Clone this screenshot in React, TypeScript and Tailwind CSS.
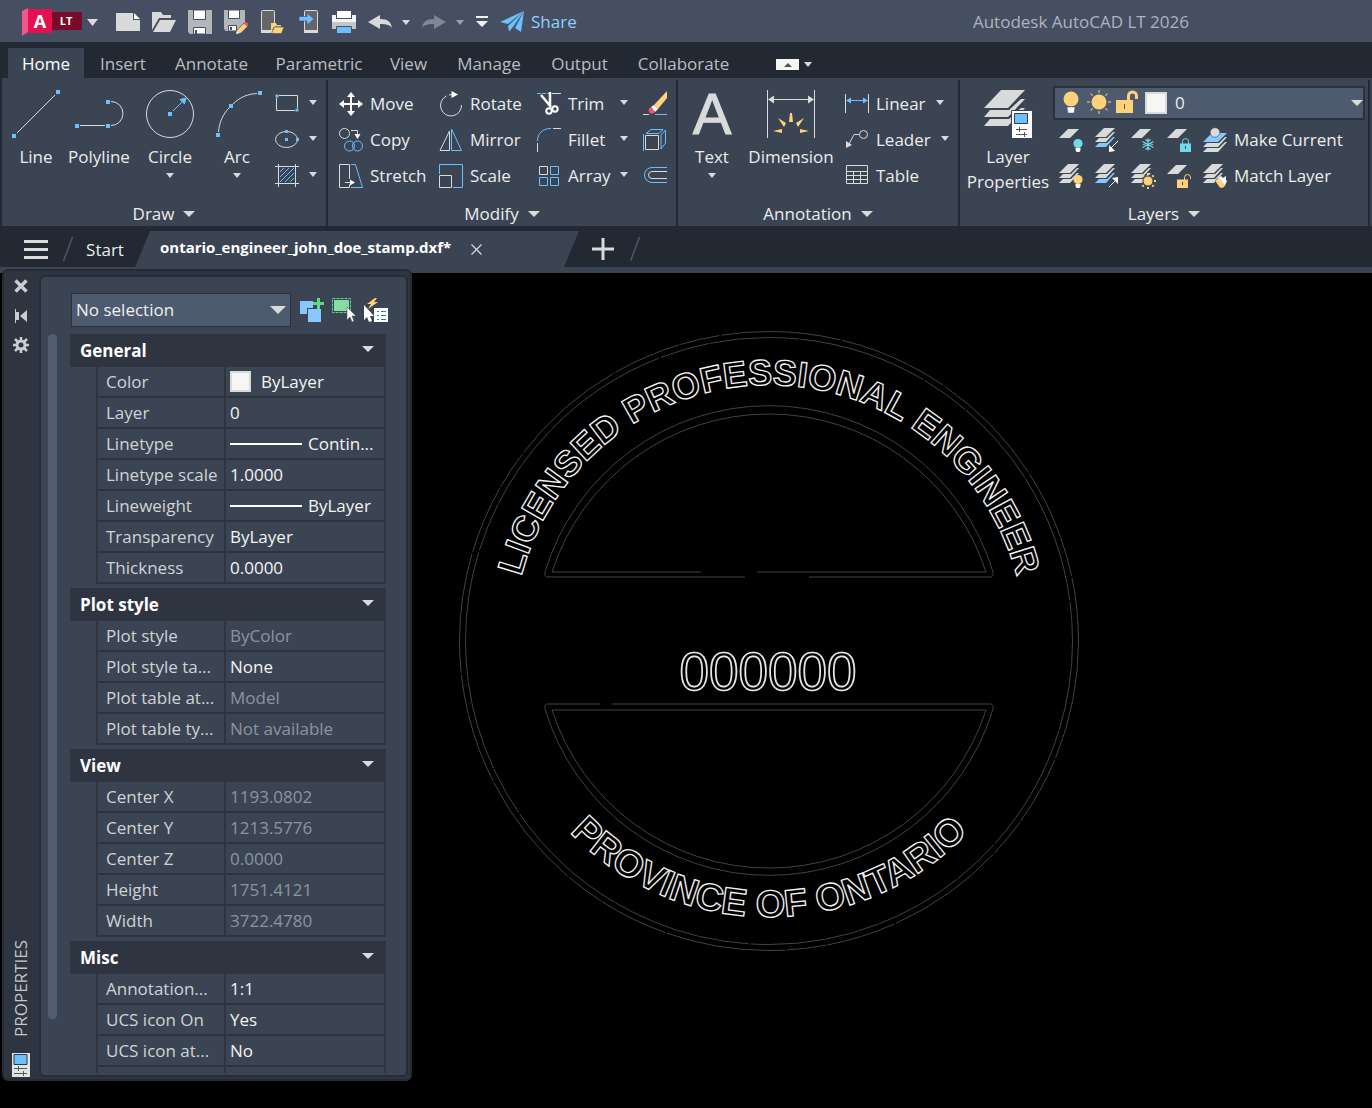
import React from 'react';

const LIGHT = '#d9dbdb';
const BLUE = '#6cc0ff';
const GOLD = '#ffd27a';
const TEAL = '#6fdbe8';

interface ChildrenProps {
  children?: React.ReactNode;
}

/* ---------- Icon helpers ---------- */

const Icon: React.FC<ChildrenProps> = ({ children }) => (
  <svg viewBox="0 0 24 24" className="w-6 h-6 shrink-0 overflow-visible" fill="none" stroke={LIGHT} aria-hidden="true">
    {children}
  </svg>
);

const BigIcon: React.FC<ChildrenProps> = ({ children }) => (
  <svg viewBox="0 0 50 52" className="w-[50px] h-[52px] shrink-0" fill="none" stroke={LIGHT} aria-hidden="true">
    {children}
  </svg>
);

const Dot: React.FC<{ x: number; y: number; size?: number }> = ({ x, y, size = 4 }) => (
  <rect x={x - size / 2} y={y - size / 2} width={size} height={size} fill={BLUE} stroke="none" />
);

const Caret: React.FC<{ dim?: boolean }> = ({ dim }) => (
  <svg viewBox="0 0 8 5" className="w-2 h-[5px] shrink-0" aria-hidden="true">
    <path d="M0 0h8L4 5z" fill={dim ? '#9aa0aa' : LIGHT} />
  </svg>
);

const BigCaret: React.FC = () => (
  <svg viewBox="0 0 12 6" className="w-3 h-[6px] shrink-0" aria-hidden="true">
    <path d="M0 0h12L6 6z" fill={LIGHT} />
  </svg>
);

const Sheet = () => <path d="M0 10 9 1h11l-9 9z" fill={LIGHT} stroke="none" />;

const Sheets: React.FC<{ last?: string; first?: string }> = ({ last = LIGHT, first = LIGHT }) => (
  <g stroke="none" fill={LIGHT}>
    <path d="M0 9 9 0h11l-9 9z" fill={first} />
    <path d="M0 14l4-4h8l6-6h2l-9 10z" />
    <path d="M0 19l4-4h8l6-6h2l-9 10z" fill={last} />
  </g>
);

const Bulb: React.FC<{ color: string }> = ({ color }) => (
  <g stroke="none">
    <circle cx="19" cy="15.5" r="4.6" fill={color} />
    <path d="M16.5 20h5v2l-1 2h-3l-1-2z" fill="#fff" />
  </g>
);

const Rays: React.FC<{ cx: number; cy: number; r: number; len: number; width: number }> = ({ cx, cy, r, len, width }) => (
  <g stroke={GOLD} strokeWidth={width}>
    {[0, 45, 90, 135, 180, 225, 270, 315].map((a) => (
      <path key={a} d={`M${cx + r} ${cy}h${len}`} transform={`rotate(${a} ${cx} ${cy})`} />
    ))}
  </g>
);

/* ---------- Ribbon building blocks ---------- */

const RibbonPanel: React.FC<ChildrenProps & { title: string; className?: string }> = ({ title, className = '', children }) => (
  <section className={`bg-[#3b4453] border-r-2 border-[#222933] ${className}`}>
    <div className="flex h-[116px] pt-[6px] mb-[6px]">{children}</div>
    <button className="flex items-center justify-center gap-[9px] w-full h-6">
      {title}
      <BigCaret />
    </button>
  </section>
);

const BigButton: React.FC<ChildrenProps & { label: string; menu?: boolean; className: string }> = ({ label, menu, className, children }) => (
  <button className={`flex flex-col items-center shrink-0 pt-[2px] ${className}`}>
    {children}
    <span className="mt-1 leading-[25px]">{label}</span>
    {menu && <span className="mt-1"><Caret /></span>}
  </button>
);

const SmallButton: React.FC<ChildrenProps & { label: string }> = ({ label, children }) => (
  <button className="flex items-center gap-[7px] h-9 whitespace-nowrap">
    <Icon>{children}</Icon>
    {label}
  </button>
);

const IconButton: React.FC<ChildrenProps & { label: string }> = ({ label, children }) => (
  <button aria-label={label} className="flex items-center h-9">
    <Icon>{children}</Icon>
  </button>
);

const MenuButton: React.FC<{ label: string }> = ({ label }) => (
  <button aria-label={label} className="flex items-center h-9 pb-[3px]">
    <Caret />
  </button>
);

/* ---------- Title bar ---------- */

const TitleBar: React.FC = () => (
  <header className="flex items-center h-[42px] pt-[2px] bg-[#454f61] pl-[22px]">
    <button aria-label="Application menu" className="flex items-center">
      <svg viewBox="0 0 60 28" className="w-[60px] h-7">
        <path d="M0 3 6 0v24l-6 4z" fill="#f0588a" />
        <path d="M6 1h24v24H6z" fill="#e51050" />
        <path d="M30 4h30v18H30z" fill="#780a2a" />
        <text x="18" y="20" textAnchor="middle" fill="#fff" className="font-bold text-[18px]">A</text>
        <text x="44" y="17" textAnchor="middle" fill="#fff" className="font-bold text-[11px]">LT</text>
      </svg>
      <svg viewBox="0 0 12 7" className="w-3 h-[7px] ml-[5px]"><path d="M0 0h11L5.500 7z" fill={LIGHT} /></svg>
    </button>
    <div className="flex items-center gap-3 ml-[17px]">
      <button aria-label="New">
        <Icon>
          <path d="M0 3h17v7h7v11H0z" fill={LIGHT} stroke="none" />
          <path d="M18 3l6 6h-6z" fill="#fff" stroke="none" />
        </Icon>
      </button>
      <button aria-label="Open">
        <Icon>
          <path d="M0 2h9l2 3h8v3H7L0 20z" fill={LIGHT} stroke="none" />
          <path d="M8 10h16l-6 12H1z" fill={LIGHT} stroke="none" />
        </Icon>
      </button>
      <button aria-label="Save">
        <Icon>
          <path d="M0 0h24v24H2l-2-2z" fill="#b3b7ba" stroke="none" />
          <path d="M5.500 0h12v9.500h-12z" fill="#fff" stroke="#454f61" />
          <path d="M5.500 17.500h12V24h-12z" fill="#fff" stroke="#454f61" />
          <path d="M8 20v4" stroke="#454f61" strokeWidth="2" />
        </Icon>
      </button>
      <button aria-label="Save as">
        <Icon>
          <path d="M0 0h21v12l-9 9H2l-2-2z" fill="#b3b7ba" stroke="none" />
          <path d="M4.500 0h11v8.500h-11z" fill="#fff" stroke="#454f61" />
          <path d="M4.500 15.500h8V21h-8z" fill="#fff" stroke="#454f61" />
          <path d="M7 17v3" stroke="#454f61" strokeWidth="2" />
          <path d="M12 24l1-4 7-7 4 3-7 7z" fill={GOLD} stroke="#454f61" strokeWidth=".6" />
          <path d="M19.500 13.500l2-1.800 3 2.300-1.500 2.500z" fill="#f5555d" stroke="none" />
          <path d="M12 24l1-3 2.500 2z" fill="#fff" stroke="none" />
        </Icon>
      </button>
      <button aria-label="Open from web and mobile">
        <Icon>
          <rect x="1.500" y=".5" width="13" height="22" rx="1" fill="#666" />
          <path d="M1 20h14v3H1z" fill={LIGHT} stroke="none" />
          <path d="M11 13h5l1 2h4v1.500h-7L11 22z" fill={GOLD} stroke="none" />
          <path d="M14.500 17H24l-2.500 6.500H11.500z" fill={GOLD} stroke="#454f61" strokeWidth=".6" />
        </Icon>
      </button>
      <button aria-label="Save to web and mobile">
        <Icon>
          <rect x="8.500" y=".5" width="13" height="22" rx="1" fill="#666" />
          <path d="M8 20h14v3H8z" fill={LIGHT} stroke="none" />
          <path d="M3 6.500h8V3l7 6-7 6v-4H3z" fill={BLUE} stroke="#454f61" strokeWidth=".6" />
        </Icon>
      </button>
      <button aria-label="Plot">
        <Icon>
          <path d="M4.500.5h15v8h-15z" fill="#fff" stroke="#454f61" />
          <path d="M0 5h4v4h16V5h4v7H0z" fill="#f4f4f4" stroke="none" />
          <path d="M0 12h24v7H0z" fill="#c4c7c8" stroke="none" />
          <path d="M4.500 16.500h15v7h-15z" fill={BLUE} stroke="#454f61" />
        </Icon>
      </button>
      <button aria-label="Undo">
        <Icon>
          <path d="M0 12 12 5v4c8 0 11 3 12 9-2-3-5-4-12-4v5z" fill={LIGHT} stroke="none" />
        </Icon>
      </button>
    </div>
    <button aria-label="Undo list" className="ml-[10px]"><Caret /></button>
    <button aria-label="Redo" className="ml-3" disabled>
      <Icon>
        <path d="M24 12 12 5v4C4 9 1 12 0 18c2-3 5-4 12-4v5z" fill="#7f8793" stroke="none" />
      </Icon>
    </button>
    <button aria-label="Redo list" className="ml-[10px]"><Caret dim /></button>
    <button aria-label="Customize toolbar" className="ml-3">
      <svg viewBox="0 0 12 12" className="w-3 h-3"><path d="M0 0h12v2H0zM0 5h12l-6 6z" fill="#f2f2f2" /></svg>
    </button>
    <a href="#share" className="flex items-center gap-[7px] ml-3 text-[#8fd0ff]">
      <Icon>
        <path d="M0 12 24 1 8 14zM24 1l-3 21-6-4zM24 1 13 17 9 21.500 8 16z" fill={BLUE} stroke="none" />
      </Icon>
      Share
    </a>
    <span className="ml-auto mr-[183px] text-[#adb3be]">Autodesk AutoCAD LT 2026</span>
  </header>
);

/* ---------- Ribbon ---------- */

const RIBBON_TABS = [
  { name: 'Home', width: 'w-[76px]' },
  { name: 'Insert', width: 'w-[78px]' },
  { name: 'Annotate', width: 'w-[99px]' },
  { name: 'Parametric', width: 'w-[116px]' },
  { name: 'View', width: 'w-[63px]' },
  { name: 'Manage', width: 'w-[98px]' },
  { name: 'Output', width: 'w-[83px]' },
  { name: 'Collaborate', width: 'w-[125px]' },
];

const RibbonTabs: React.FC = () => (
  <nav className="flex items-end h-9 pl-2">
    {RIBBON_TABS.map((tab) => (
      <button
        key={tab.name}
        className={`h-[30px] pt-[2px] ${tab.width} ${tab.name === 'Home' ? 'bg-[#3b4453] text-white' : 'text-[#b9bdc3]'}`}
      >
        {tab.name}
      </button>
    ))}
    <button aria-label="Minimize ribbon" className="flex items-center gap-[5px] h-[30px] pt-[3px] ml-[30px]">
      <span className="flex items-center justify-center w-[23px] h-[11px] bg-[#f5f5f5]">
        <svg viewBox="0 0 8 4" className="w-2 h-1"><path d="M4 0l4 4H0z" fill="#555" /></svg>
      </span>
      <Caret />
    </button>
  </nav>
);

const DrawPanel: React.FC = () => (
  <RibbonPanel title="Draw" className="w-[326px]">
    <BigButton label="Line" className="w-[52px] ml-2">
      <BigIcon>
        <path d="M6 45 44 7" />
        <Dot x={3} y={48} />
        <Dot x={47} y={4} />
      </BigIcon>
    </BigButton>
    <BigButton label="Polyline" className="w-[74px]">
      <BigIcon>
        <path d="M6 37.500h25M37 13.500a12 12 0 0 1 0 24" />
        <Dot x={3} y={38} />
        <Dot x={34} y={38} />
        <Dot x={34} y={14} />
      </BigIcon>
    </BigButton>
    <BigButton label="Circle" menu className="w-[68px]">
      <BigIcon>
        <circle cx="25" cy="26" r="23.500" />
        <Dot x={25} y={26} />
        <path d="M28 23l9-9" stroke={BLUE} />
        <path d="M41 10l-1.500 6-4.500-4.500z" fill={BLUE} stroke={BLUE} />
      </BigIcon>
    </BigButton>
    <BigButton label="Arc" menu className="w-[66px]">
      <BigIcon>
        <path d="M6.500 44C7 35 11 26 17 20M21 16c7-7 15-10 24-10.500" />
        <Dot x={6} y={47} />
        <Dot x={19} y={18} />
        <Dot x={48} y={5} />
      </BigIcon>
    </BigButton>
    <div className="grid grid-cols-[24px_8px] gap-x-[10px] ml-[5px] content-start">
      <IconButton label="Rectangle">
        <path d="M4 3.500h18.500V16M20 18.500H1.500V6" />
        <Dot x={2} y={4} size={3} />
        <Dot x={22} y={18} size={3} />
      </IconButton>
      <MenuButton label="Rectangle options" />
      <IconButton label="Ellipse">
        <ellipse cx="11.500" cy="11.500" rx="11" ry="8" />
        <Dot x={11.5} y={3.5} size={3} />
        <Dot x={11.5} y={11.5} size={3} />
        <Dot x={22.5} y={11.5} size={3} />
      </IconButton>
      <MenuButton label="Ellipse options" />
      <IconButton label="Hatch">
        <path d="M0 2.500h24M0 19.500h24M3.500 0v23M20.500 0v23" />
        <path d="M5 8l4-4M5 13l9-9M5 18 19 4M10 18l9-9M15 18l4-4" stroke={BLUE} />
      </IconButton>
      <MenuButton label="Hatch options" />
    </div>
  </RibbonPanel>
);

const ModifyPanel: React.FC = () => (
  <RibbonPanel title="Modify" className="w-[350px]">
    <div className="flex flex-col w-[100px] ml-[11px]">
      <SmallButton label="Move">
        <path d="M12 4v16M4 12h16" strokeWidth="2" stroke="#fff" />
        <path d="M12 0l4 5H8zM12 24l4-5H8zM0 12l5-4v8zM24 12l-5-4v8z" fill="#fff" stroke="none" />
      </SmallButton>
      <SmallButton label="Copy">
        <circle cx="5.500" cy="5.500" r="5" />
        <path d="M12 2.500h6.500V7" />
        <path d="M15.500 6h6l-3 5z" fill="#fff" stroke="none" />
        <circle cx="10.500" cy="18" r="5" stroke={BLUE} />
        <circle cx="18.500" cy="18" r="5" stroke={BLUE} />
      </SmallButton>
      <SmallButton label="Stretch">
        <path d="M10.500 15V.5H.5v23h10v-3" />
        <path d="M12 .5h4.500l7 23H12" stroke={BLUE} />
        <path d="M6 18.500h6" />
        <path d="M11 15.500l5 3-5 3z" fill="#fff" stroke="none" />
      </SmallButton>
    </div>
    <div className="flex flex-col w-[98px]">
      <SmallButton label="Rotate">
        <path d="M7.500 4A10.500 10.500 0 1 0 22.500 13M10 3l3-.5" />
        <path d="M12.500-1l6.500 3.500-6.500 3.500z" fill="#fff" stroke="none" />
      </SmallButton>
      <SmallButton label="Mirror">
        <path d="M10.500 3v19.500H1z" />
        <path d="M12.500 1v21.500h10z" stroke={BLUE} />
      </SmallButton>
      <SmallButton label="Scale">
        <path d="M.5 10V.5h23v23H14" stroke={BLUE} />
        <path d="M.5 11.500h12v12H.5z" />
      </SmallButton>
    </div>
    <div className="grid grid-cols-[83px_8px] content-start w-[106px]">
      <SmallButton label="Trim">
        <path d="M0 1.500h12" stroke={BLUE} strokeDasharray="4 1" />
        <path d="M15 1.500h9" />
        <path d="M4 3l10 12M13 0v14" stroke="#fff" strokeWidth="2.500" />
        <circle cx="12" cy="19" r="2.700" stroke="#fff" strokeWidth="2" />
        <circle cx="18" cy="17" r="2.700" stroke="#fff" strokeWidth="2" />
      </SmallButton>
      <MenuButton label="Trim options" />
      <SmallButton label="Fillet">
        <path d="M.5 13C.5 5 6 .5 14 .5" stroke={BLUE} />
        <path d="M16 .5h8M.5 15v9" />
      </SmallButton>
      <MenuButton label="Fillet options" />
      <SmallButton label="Array">
        <path d="M2.500 2.500h8v8h-8z" />
        <path d="M13.500 2.500h8v8h-8zM2.500 13.500h8v8h-8zM13.500 13.500h8v8h-8z" stroke={BLUE} />
      </SmallButton>
      <MenuButton label="Array options" />
    </div>
    <div className="flex flex-col">
      <IconButton label="Erase">
        <path d="M0 22.500h6" />
        <path d="M12 22.500h12" stroke={BLUE} />
        <path d="M11 13 24-1v7L15 17z" fill={GOLD} stroke="none" />
        <path d="M8 15l3-2 4 4-3 3z" fill="#fff" stroke="none" />
        <path d="M8 15l4 5c-2 2-5 2-6 0s0-4 2-5z" fill="#f5555d" stroke="none" />
      </IconButton>
      <IconButton label="Explode">
        <path d="M2.500 7.500h13v14h-13z" />
        <path d="M.5 6v17M3 5.500l5-4h12l-4 4zM18 7l4.500-5v13L18 21z" stroke={BLUE} />
      </IconButton>
      <IconButton label="Offset">
        <path d="M24 3.500H9a7.500 7.500 0 0 0 0 15h15" stroke={BLUE} />
        <path d="M24 7.500H9a3.500 3.500 0 0 0 0 7h15" />
      </IconButton>
    </div>
  </RibbonPanel>
);

const AnnotationPanel: React.FC = () => (
  <RibbonPanel title="Annotation" className="w-[282px]">
    <BigButton label="Text" menu className="w-[60px] ml-1">
      <span aria-hidden="true" className="h-[52px] font-['Liberation_Sans',sans-serif] text-[58px] leading-[52px] text-[#d9dbdb] [-webkit-text-stroke:1px_#d9dbdb]">A</span>
    </BigButton>
    <BigButton label="Dimension" className="w-[98px]">
      <BigIcon>
        <path d="M1.500 2v48M48.500 2v48M4 11.500h42" />
        <path d="M2 11.500l6-4v8zM48 11.500l-6-4v8z" fill={LIGHT} stroke="none" />
        <g fill={GOLD} stroke="none">
          <path d="M24 25h2l1 9h-4zM12 30l8 5-2 4zM38 30l-8 5 2 4zM7 43l9-2v4zM43 43l-9-2v4z" />
        </g>
      </BigIcon>
    </BigButton>
    <div className="flex flex-col ml-[5px]">
      <div className="flex gap-[10px]">
        <SmallButton label="Linear">
          <path d="M.5 2v19M23.500 2v19" />
          <path d="M4 8.500h16" stroke={BLUE} />
          <path d="M1 8.500l5-3v6zM23 8.500l-5-3v6z" fill={BLUE} stroke="none" />
        </SmallButton>
        <MenuButton label="Linear options" />
      </div>
      <div className="flex gap-[10px]">
        <SmallButton label="Leader">
          <circle cx="18.500" cy="6.500" r="4" />
          <path d="M14 6.500H9L4 16" />
          <path d="M1 20v-7l6 4z" fill={LIGHT} stroke="none" />
        </SmallButton>
        <MenuButton label="Leader options" />
      </div>
      <SmallButton label="Table">
        <path d="M1.500 1.500h21v18h-21zM1.500 7.500h21M1.500 11.500h21M1.500 15.500h21M8.500 8v12M15.500 8v12" />
      </SmallButton>
    </div>
  </RibbonPanel>
);

const LayersPanel: React.FC = () => (
  <RibbonPanel title="Layers" className="flex-1 mr-[2px] min-w-[410px]">
    <button className="flex flex-col items-center w-[88px] shrink-0 ml-1 pt-[2px]">
      <svg viewBox="0 0 50 52" className="w-[50px] h-[52px] shrink-0" fill={LIGHT} aria-hidden="true">
        <path d="M1 20 18 2h24L25 20z" />
        <path d="M1 29l6-7h19L38 11h4L25 29zM1 38l6-7h19L38 20h4L25 38z" />
        <path d="M28.500 22.500h21v28h-21z" fill="#fff" stroke="#3b4453" />
        <path d="M31.500 25.500h13v10h-13z" fill={BLUE} stroke="#333a47" />
        <path d="M33 41.500h11M33 46.500h11M36.500 39v5M41.500 44v5" stroke="#555" fill="none" />
      </svg>
      <span className="mt-1 leading-[25px]">Layer Properties</span>
    </button>
    <div className="flex-1 ml-[1px] mr-[3px]">
      <label className="flex items-center h-[34px] pl-1 bg-[#4e5a6d] border-2 border-[#2b313d]">
        <span className="flex items-center gap-1">
          <Icon>
            <circle cx="12" cy="8" r="7.500" fill={GOLD} stroke="none" />
            <path d="M8 16h8l-1 6H9z" fill="#fff" stroke="#4e5a6d" strokeWidth=".5" />
          </Icon>
          <Icon>
            <circle cx="12" cy="11" r="7.500" fill={GOLD} stroke="none" />
            <Rays cx={12} cy={11} r={9} len={3} width={1} />
          </Icon>
          <Icon>
            <path d="M1 9h17v13H1z" fill={GOLD} stroke="none" />
            <path d="M13.500 9V5a4 4 0 0 1 8 0v3" stroke={GOLD} strokeWidth="3" />
            <path d="M9.500 13v5" stroke="#4e5a6d" />
          </Icon>
          <span className="w-[22px] h-[22px] ml-[2px] bg-[#f6f6f6] border-2 border-[#d9dbdb]" />
        </span>
        <select aria-label="Current layer" className="flex-1 appearance-none bg-transparent ml-2 outline-none">
          <option>0</option>
        </select>
        <span className="pointer-events-none -ml-3"><BigCaret /></span>
      </label>
      <div className="flex ml-[6px] mt-[2px]">
        <div className="grid grid-cols-[repeat(4,36px)] content-start">
          <IconButton label="Layer off">
            <Sheet />
            <Bulb color={TEAL} />
          </IconButton>
          <IconButton label="Isolate">
            <Sheets last="#86c8fb" />
            <path d="M23 13l-7 7" stroke="#fff" />
            <path d="M14 24v-7l6 6z" fill="#fff" stroke="none" />
          </IconButton>
          <IconButton label="Freeze">
            <Sheet />
            <path d="M17 10.500v12M11.500 13.500l11 6M22.500 13.500l-11 6M14.500 11.500l2.500 2 2.500-2M14.500 21.500l2.500-2 2.500 2M12 16.500l2.500-.5M22 16.500l-2.500-.5" stroke={TEAL} strokeWidth="1.200" />
          </IconButton>
          <IconButton label="Lock">
            <Sheet />
            <path d="M13 15.500h11V24H13z" fill={TEAL} stroke="none" />
            <path d="M15.500 16v-2.500a3 3 0 0 1 6 0V16" stroke={TEAL} />
            <path d="M18.500 18v3" stroke="#3b4453" />
          </IconButton>
          <IconButton label="Turn all layers on">
            <Sheets />
            <Bulb color={GOLD} />
          </IconButton>
          <IconButton label="Unisolate">
            <Sheets last="#86c8fb" />
            <path d="M14 23l7-7" stroke="#fff" />
            <path d="M23 13v7l-6-6z" fill="#fff" stroke="none" />
          </IconButton>
          <IconButton label="Thaw all layers">
            <Sheets />
            <circle cx="17" cy="17" r="5" fill={GOLD} stroke="#3b4453" />
            <Rays cx={17} cy={17} r={6} len={2} width={2} />
          </IconButton>
          <IconButton label="Unlock">
            <Sheet />
            <path d="M10 15.500h11V24H10z" fill={GOLD} stroke="none" />
            <path d="M17.500 16v-2.500a3 3 0 0 1 6 0V15" stroke={GOLD} />
            <path d="M15.500 18v3" stroke="#3b4453" />
          </IconButton>
        </div>
        <div className="flex flex-col">
          <SmallButton label="Make Current">
            <g stroke="none" fill={LIGHT}>
              <path d="M0 14 9 5h15l-9 9z" fill="#86c8fb" />
              <path d="M0 19l4-4h12l6-6h2l-9 10zM0 24l4-4h12l6-6h2l-9 10z" />
            </g>
            <circle cx="12" cy="4.500" r="4.800" fill={LIGHT} stroke="#3b4453" strokeWidth=".6" />
          </SmallButton>
          <SmallButton label="Match Layer">
            <Sheets />
            <path d="M12 17l3-3 8 7-3 3h-3z" fill={GOLD} stroke="#3b4453" strokeWidth=".5" />
            <path d="M15 14l3-2 2 2 3-2v4l1 1-2 4z" fill="#fff" stroke="none" />
          </SmallButton>
        </div>
      </div>
    </div>
  </RibbonPanel>
);

/* ---------- Drawing file tabs ---------- */

const Slash: React.FC = () => (
  <svg viewBox="0 0 10 24" className="w-[10px] h-6" aria-hidden="true">
    <path d="M.5 24 9.500 0" stroke="#4e5665" strokeWidth="1.500" />
  </svg>
);

const FileTabs: React.FC = () => (
  <nav className="flex items-center h-9 mt-[5px]">
    <button aria-label="File tab menu" className="flex flex-col gap-[5px] w-6 ml-6">
      <span className="h-[3px] bg-[#d9dbdb]" />
      <span className="h-[3px] bg-[#d9dbdb]" />
      <span className="h-[3px] bg-[#d9dbdb]" />
    </button>
    <span className="ml-[15px]"><Slash /></span>
    <button className="w-[38px] ml-[13px] pt-[2px]">Start</button>
    <div className="flex items-center h-9 w-[444px] ml-[11px] pl-[25px] bg-[#3b4453] [clip-path:polygon(15px_0,100%_0,429px_100%,0_100%)]">
      <button className="w-[293px] text-left text-[15px] leading-8 font-bold text-white pb-1 whitespace-nowrap">ontario_engineer_john_doe_stamp.dxf*</button>
      <button aria-label="Close tab" className="ml-[18px]">
        <svg viewBox="0 0 11 11" className="w-[11px] h-[11px]"><path d="M.5.500l10 10M10.500.5l-10 10" stroke={LIGHT} strokeWidth="1.200" /></svg>
      </button>
    </div>
    <button aria-label="New tab" className="ml-[13px]">
      <svg viewBox="0 0 22 22" className="w-[22px] h-[22px]"><path d="M0 11h22M11 0v22" stroke={LIGHT} strokeWidth="3" /></svg>
    </button>
    <span className="ml-4"><Slash /></span>
  </nav>
);

/* ---------- Properties palette ---------- */

interface Property {
  name: string;
  value: string;
  swatch?: boolean;
  line?: boolean;
  readOnly?: boolean;
}

const GROUPS: { title: string; rows: Property[] }[] = [
  {
    title: 'General',
    rows: [
      { name: 'Color', value: 'ByLayer', swatch: true },
      { name: 'Layer', value: '0' },
      { name: 'Linetype', value: 'Contin...', line: true },
      { name: 'Linetype scale', value: '1.0000' },
      { name: 'Lineweight', value: 'ByLayer', line: true },
      { name: 'Transparency', value: 'ByLayer' },
      { name: 'Thickness', value: '0.0000' },
    ],
  },
  {
    title: 'Plot style',
    rows: [
      { name: 'Plot style', value: 'ByColor', readOnly: true },
      { name: 'Plot style ta...', value: 'None' },
      { name: 'Plot table at...', value: 'Model', readOnly: true },
      { name: 'Plot table ty...', value: 'Not available', readOnly: true },
    ],
  },
  {
    title: 'View',
    rows: [
      { name: 'Center X', value: '1193.0802', readOnly: true },
      { name: 'Center Y', value: '1213.5776', readOnly: true },
      { name: 'Center Z', value: '0.0000', readOnly: true },
      { name: 'Height', value: '1751.4121', readOnly: true },
      { name: 'Width', value: '3722.4780', readOnly: true },
    ],
  },
  {
    title: 'Misc',
    rows: [
      { name: 'Annotation...', value: '1:1' },
      { name: 'UCS icon On', value: 'Yes' },
      { name: 'UCS icon at...', value: 'No' },
      { name: '', value: '' },
    ],
  },
];

const PropertyGroup: React.FC<{ title: string; rows: Property[] }> = ({ title, rows }) => (
  <section className="mb-1">
    <button className="flex items-center justify-between w-full h-[33px] pl-[10px] pr-3 bg-[#2e3440] font-bold text-white">
      {title}
      <span className="pb-1"><BigCaret /></span>
    </button>
    <table className="w-[290px] ml-[26px] table-fixed border-separate border-spacing-0 border-l-2 border-[#2e3440]">
      <tbody>
        {rows.map((row) => (
          <tr key={row.name} className="h-[31px]">
            <th scope="row" className="w-[128px] p-0 pl-2 border-r-2 border-b-2 border-[#2e3440] text-left font-normal text-[#d0d3d6] whitespace-nowrap">
              {row.name}
            </th>
            <td className={`p-0 pl-1 border-r-2 border-b-2 border-[#2e3440] ${row.readOnly ? 'text-[#8d949e]' : 'text-[#f4f4f4]'}`}>
              <div className="flex items-center h-[29px] whitespace-nowrap">
                {row.swatch && <span className="w-[21px] h-[21px] mr-[10px] bg-[#f6f6f6] border-2 border-[#d9dbdb]" />}
                {row.line && <span className="w-[72px] h-[2px] mr-[6px] bg-white" />}
                {row.value}
              </div>
            </td>
          </tr>
        ))}
      </tbody>
    </table>
  </section>
);

const PropertiesPalette: React.FC = () => (
  <aside className="absolute left-[2px] -top-1 bottom-[27px] w-[410px] flex pt-1 pr-[2px] pb-[2px] rounded-md bg-[#2e3440] border-2 border-[#252b35] text-[#d0d3d6]">
    <div className="flex flex-col items-center w-[35px] pt-1 pr-[1px]">
      <button aria-label="Close palette">
        <svg viewBox="0 0 14 14" className="w-[14px] h-[14px]"><path d="M1.500 1.500l11 11M12.500 1.500l-11 11" stroke="#c9ccd0" strokeWidth="3.500" /></svg>
      </button>
      <button aria-label="Auto-hide" className="mt-4">
        <svg viewBox="0 0 14 14" className="w-[14px] h-[14px]" fill="#c9ccd0"><path d="M1 0h1v14H1zM2 3h3v8H2zM6 7l7-6v12z" /></svg>
      </button>
      <button aria-label="Palette settings" className="mt-[14px]">
        <svg viewBox="0 0 16 16" className="w-4 h-4" stroke="#c9ccd0" strokeWidth="3" fill="none">
          <circle cx="8" cy="8" r="4" />
          <path d="M8 0v4M8 12v4M0 8h4M12 8h4M2 2l3 3M11 11l3 3M14 2l-3 3M5 11l-3 3" strokeWidth="2.500" />
        </svg>
      </button>
      <span className="mt-auto [writing-mode:vertical-rl] rotate-180 text-[17px] text-[#c3c7cc]">PROPERTIES</span>
      <svg viewBox="0 0 18 24" className="w-[18px] h-6 mt-4 shrink-0" aria-hidden="true">
        <path d="M0 0h18v24H0z" fill="#e2e4e4" />
        <path d="M2 1.500h13v10H2z" fill={BLUE} stroke="#2e3440" />
        <path d="M2 15.500h13M2 20.500h13M6.500 13v5M11.500 18v5" stroke="#555" />
      </svg>
    </div>
    <div className="flex-1 flex flex-col min-h-0 pt-4 pl-[7px] pb-[2px] rounded-md bg-[#3b4453] border-2 border-[#272d38]">
      <div className="flex items-center h-[34px] pl-[23px]">
        <div className="flex items-center w-[220px] h-[34px] bg-[#4e5a6d] border border-[#2b313d]">
          <select aria-label="Selected objects" className="w-full appearance-none bg-transparent pl-1 text-[#f0f0f0] outline-none">
            <option>No selection</option>
          </select>
          <svg viewBox="0 0 16 8" className="w-4 h-2 -ml-5 mr-[2px] shrink-0 pointer-events-none"><path d="M0 0h16L8 8z" fill={LIGHT} /></svg>
        </div>
        <div className="flex gap-2 ml-[9px]">
          <button aria-label="Toggle PICKADD">
            <Icon>
              <path d="M0 3h13v13H0zM8 11h13v13H8z" fill="#86c8fb" stroke="none" />
              <path d="M13 10.500H7.500V16" stroke="#3b4453" />
              <path d="M18.500 0v11M13 5.500h11" stroke="#5fd88a" strokeWidth="3" />
            </Icon>
          </button>
          <button aria-label="Select objects">
            <Icon>
              <path d="M.5.500h18v14H.5z" stroke="#5fd88a" strokeDasharray="3 1" />
              <path d="M2 2h15v11H2z" fill="#86dca4" stroke="none" />
              <path d="M15 9v13l3-3 2 5 2-1-2-5h4z" fill="#fff" stroke="#3b4453" strokeWidth=".5" />
            </Icon>
          </button>
          <button aria-label="Quick select">
            <Icon>
              <path d="M11 0 3 6h4l-3 5 10-7h-4l3-4z" fill={GOLD} stroke="none" />
              <path d="M0 7v15l3-3 2 5 3-1-2-5h4z" fill="#fff" stroke="none" />
              <path d="M10 10h14v14H10z" fill="#fff" stroke="none" />
              <path d="M13 13.500h2M13 17.500h2M13 21.500h2M17 13.500h5M17 17.500h5M17 21.500h5" stroke="#1c7fd0" />
            </Icon>
          </button>
        </div>
      </div>
      <div className="flex flex-1 min-h-0 mt-[7px] overflow-hidden">
        <div className="w-[9px] h-[685px] shrink-0 rounded-full bg-[#525e70]" />
        <div className="w-[316px] ml-[13px]">
          {GROUPS.map((group) => (
            <PropertyGroup key={group.title} title={group.title} rows={group.rows} />
          ))}
        </div>
      </div>
    </div>
  </aside>
);

/* ---------- Model space ---------- */

const Stamp: React.FC = () => (
  <svg viewBox="-311 -311 622 622" className="w-[622px] h-[622px] ml-[458px] mt-[57px] shrink-0" fill="none" stroke="#424242" role="img" aria-label="Engineer stamp">
    <defs>
      <path id="upper" d="M-256 0A256 256 0 0 1 256 0" />
      <path id="lower" d="M-276 0A276 276 0 0 0 276 0" />
    </defs>
    <circle r="309.500" strokeDasharray="120 2 70 1 40 2" />
    <circle r="303.500" strokeDasharray="90 1 130 2 50 1" />
    <path d="M-24-64H-221Q-225-64-224-69A234 234 0 0 1 224-69Q225-64 221-64H40" />
    <path d="M-68-69H-217A228 228 0 0 1 217-69H-12" />
    <path d="M-169 63H-221Q-225 63-224 68A234 234 0 0 0 224 68Q225 63 221 63H-157" />
    <path d="M-217 69A228 228 0 0 0 217 69z" />
    <g className="font-['Liberation_Sans',sans-serif]" stroke="#f4f4f4" strokeWidth="1.300" textAnchor="middle">
      <text className="text-[36px] font-bold">
        <textPath href="#upper" startOffset="50%">LICENSED PROFESSIONAL ENGINEER</textPath>
      </text>
      <text className="text-[38px] font-bold">
        <textPath href="#lower" startOffset="50%">PROVINCE OF ONTARIO</textPath>
      </text>
      <text x="-1" y="49" className="text-[53px]" stroke="#e6e6e6" strokeWidth="1.700">000000</text>
    </g>
  </svg>
);

const App: React.FC = () => (
  <div className="flex flex-col min-h-screen overflow-hidden bg-[#222933] font-['Open_Sans','Noto_Sans',sans-serif] text-[17px] leading-6 text-[#ececec]">
    <TitleBar />
    <RibbonTabs />
    <div className="bg-[#3b4453] ml-[2px] pt-[2px] flex">
      <DrawPanel />
      <ModifyPanel />
      <AnnotationPanel />
      <LayersPanel />
    </div>
    <FileTabs />
    <div className="h-[6px] bg-[#3b4453]" />
    <main className="relative flex-1 min-h-[835px] bg-black flex items-start">
      <Stamp />
      <PropertiesPalette />
    </main>
  </div>
);

export default App;
